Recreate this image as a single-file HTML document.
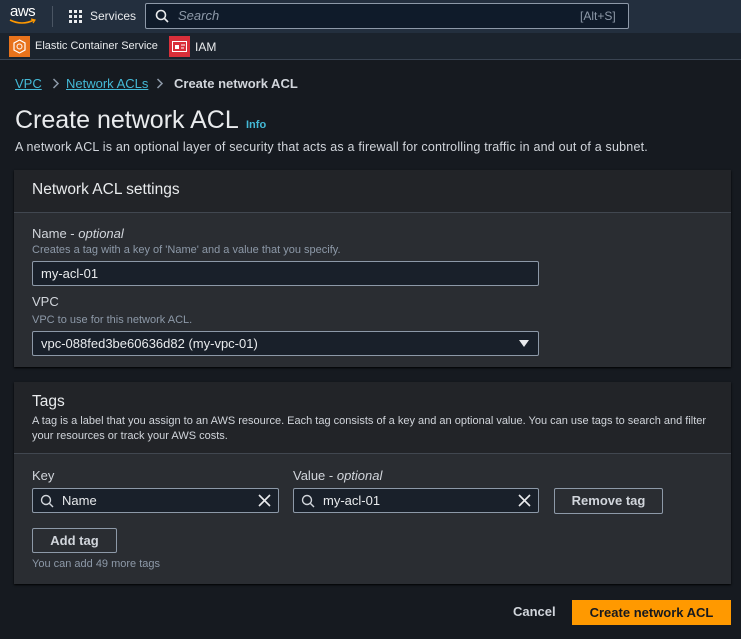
<!DOCTYPE html>
<html><head><meta charset="utf-8"><style>
*{box-sizing:border-box;margin:0;padding:0}
body{width:741px;height:639px;background:#161a20;font-family:"Liberation Sans",Arial,sans-serif;color:#d1d5db;position:relative;overflow:hidden;font-size:13px}
.a{position:absolute}
.nav{left:0;top:0;width:741px;height:33px;background:#232f3e}
.nav2{left:0;top:33px;width:741px;height:27px;background:#1b232d;border-bottom:1px solid #3a4452}
.panel{left:14px;width:717px;background:#2a2d32;box-shadow:0 1px 2px #000}
.ph{position:absolute;left:0;top:0;width:100%;background:#222428;border-bottom:1px solid #414750}
.inp{position:absolute;height:25px;background:#19202a;border:1px solid #8d99a8;border-radius:2px;color:#e9ebed;font-size:13px;line-height:23px;padding-left:8px}
.lbl{position:absolute;color:#d1d5db;font-size:13px}
.desc{position:absolute;color:#8d99a8;font-size:11px}
.btn{position:absolute;border:1px solid #8d99a8;border-radius:2px;color:#d1d5db;font-weight:bold;font-size:13px;text-align:center}
</style></head><body>
<div class="a nav"></div>
<div class="a" style="left:10px;top:3px;color:#fff;font-size:15px;letter-spacing:-.5px">aws</div>
<svg class="a" style="left:9px;top:18px" width="28" height="8"><path d="M1 2 Q13 8 25 2" stroke="#f90" stroke-width="1.6" fill="none"/><path d="M22 1 L26 2 L24 5" stroke="#f90" stroke-width="1.2" fill="none"/></svg>
<div class="a" style="left:52px;top:6px;width:1px;height:21px;background:#4a5563"></div>
<svg class="a" style="left:69px;top:10px" width="14" height="14" fill="#e9ebed"><rect x="0" y="0" width="3" height="3"/><rect x="5" y="0" width="3" height="3"/><rect x="10" y="0" width="3" height="3"/><rect x="0" y="5" width="3" height="3"/><rect x="5" y="5" width="3" height="3"/><rect x="10" y="5" width="3" height="3"/><rect x="0" y="10" width="3" height="3"/><rect x="5" y="10" width="3" height="3"/><rect x="10" y="10" width="3" height="3"/></svg>
<div class="a" style="left:90px;top:9px;color:#e9ebed;font-size:12px">Services</div>
<div class="a" style="left:145px;top:3px;width:484px;height:26px;background:#0f1b2a;border:1px solid #8d99a8;border-radius:2px"></div>
<svg class="a" style="left:155px;top:9px" width="14" height="14"><circle cx="6" cy="6" r="4.5" stroke="#e9ebed" stroke-width="1.6" fill="none"/><path d="M9.5 9.5 L13 13" stroke="#e9ebed" stroke-width="1.6"/></svg>
<div class="a" style="left:178px;top:8px;color:#8d99a8;font-style:italic;font-size:13px">Search</div>
<div class="a" style="left:580px;top:9px;color:#8d99a8;font-size:12px">[Alt+S]</div>
<div class="a nav2"></div>
<div class="a" style="left:9px;top:36px;width:21px;height:21px;background:#e8731c"></div>
<svg class="a" style="left:12px;top:39px" width="15" height="15"><path d="M7.5 1 L13 4 V11 L7.5 14 L2 11 V4 Z" stroke="#fff" stroke-width="1.2" fill="none"/><circle cx="7.5" cy="7.5" r="2.5" stroke="#fff" fill="none"/></svg>
<div class="a" style="left:35px;top:40px;color:#e9ebed;font-size:11px">Elastic Container Service</div>
<div class="a" style="left:169px;top:36px;width:21px;height:21px;background:#d92f3a"></div>
<svg class="a" style="left:172px;top:41px" width="15" height="11"><rect x="0.5" y="0.5" width="14" height="10" stroke="#fff" fill="none"/><rect x="3" y="4" width="4" height="4" fill="#fff"/><path d="M9 4h4M9 7h3" stroke="#fff"/></svg>
<div class="a" style="left:195px;top:40px;color:#e9ebed;font-size:12px">IAM</div>

<div class="a" style="left:15px;top:76px;color:#44b9d6;font-size:13px;text-decoration:underline">VPC</div>
<svg class="a" style="left:52px;top:78px" width="8" height="11"><path d="M1.5 1L6 5.5L1.5 10" stroke="#8d99a8" stroke-width="1.5" fill="none"/></svg>
<div class="a" style="left:66px;top:76px;color:#44b9d6;font-size:13px;text-decoration:underline">Network ACLs</div>
<svg class="a" style="left:156px;top:78px" width="8" height="11"><path d="M1.5 1L6 5.5L1.5 10" stroke="#8d99a8" stroke-width="1.5" fill="none"/></svg>
<div class="a" style="left:174px;top:76px;color:#d1d5db;font-size:13px;font-weight:bold">Create network ACL</div>
<div class="a" style="left:15px;top:106px;color:#e9ebed;font-size:25px">Create network ACL</div>
<div class="a" style="left:246px;top:119px;color:#44b9d6;font-size:11px;font-weight:bold">Info</div>
<div class="a" style="left:15px;top:140px;color:#d1d5db;font-size:12.5px;letter-spacing:.2px">A network ACL is an optional layer of security that acts as a firewall for controlling traffic in and out of a subnet.</div>

<div class="a panel" style="top:170px;height:197px">
 <div class="ph" style="height:43px"></div>
 <div class="a" style="left:18px;top:11px;color:#e9ebed;font-size:15.5px">Network ACL settings</div>
 <div class="lbl" style="left:18px;top:56px">Name - <i>optional</i></div>
 <div class="desc" style="left:18px;top:74px">Creates a tag with a key of 'Name' and a value that you specify.</div>
 <div class="inp" style="left:18px;top:91px;width:507px">my-acl-01</div>
 <div class="lbl" style="left:18px;top:124px">VPC</div>
 <div class="desc" style="left:18px;top:144px">VPC to use for this network ACL.</div>
 <div class="inp" style="left:18px;top:161px;width:507px">vpc-088fed3be60636d82 (my-vpc-01)</div>
 <svg class="a" style="left:505px;top:170px" width="10" height="8"><path d="M0 0H10L5 7Z" fill="#e9ebed"/></svg>
</div>

<div class="a panel" style="top:382px;height:202px">
 <div class="ph" style="height:72px"></div>
 <div class="a" style="left:18px;top:11px;color:#e9ebed;font-size:15.5px">Tags</div>
 <div class="desc" style="left:18px;top:32px;color:#d1d5db;line-height:15px;width:690px">A tag is a label that you assign to an AWS resource. Each tag consists of a key and an optional value. You can use tags to search and filter your resources or track your AWS costs.</div>
 <div class="lbl" style="left:18px;top:86px">Key</div>
 <div class="lbl" style="left:279px;top:86px">Value - <i>optional</i></div>
 <div class="inp" style="left:18px;top:106px;width:247px;padding-left:29px">Name</div>
 <div class="inp" style="left:279px;top:106px;width:246px;padding-left:29px">my-acl-01</div>
 <svg class="a" style="left:26px;top:112px" width="14" height="14"><circle cx="6" cy="6" r="4.5" stroke="#d1d5db" stroke-width="1.4" fill="none"/><path d="M9.5 9.5 L13 13" stroke="#d1d5db" stroke-width="1.4"/></svg>
 <svg class="a" style="left:287px;top:112px" width="14" height="14"><circle cx="6" cy="6" r="4.5" stroke="#d1d5db" stroke-width="1.4" fill="none"/><path d="M9.5 9.5 L13 13" stroke="#d1d5db" stroke-width="1.4"/></svg>
 <svg class="a" style="left:244px;top:112px" width="13" height="13"><path d="M1 1L12 12M12 1L1 12" stroke="#e9ebed" stroke-width="1.6"/></svg>
 <svg class="a" style="left:504px;top:112px" width="13" height="13"><path d="M1 1L12 12M12 1L1 12" stroke="#e9ebed" stroke-width="1.6"/></svg>
 <div class="btn" style="left:540px;top:106px;width:109px;height:26px;line-height:24px">Remove tag</div>
 <div class="btn" style="left:18px;top:146px;width:85px;height:25px;line-height:23px">Add tag</div>
 <div class="desc" style="left:18px;top:176px">You can add 49 more tags</div>
</div>

<div class="a" style="left:513px;top:604px;color:#d1d5db;font-weight:bold;font-size:13px">Cancel</div>
<div class="a" style="left:572px;top:600px;width:159px;height:25px;background:#ff9900;color:#16191f;font-weight:bold;font-size:13px;text-align:center;line-height:25px">Create network ACL</div>
</body></html>
